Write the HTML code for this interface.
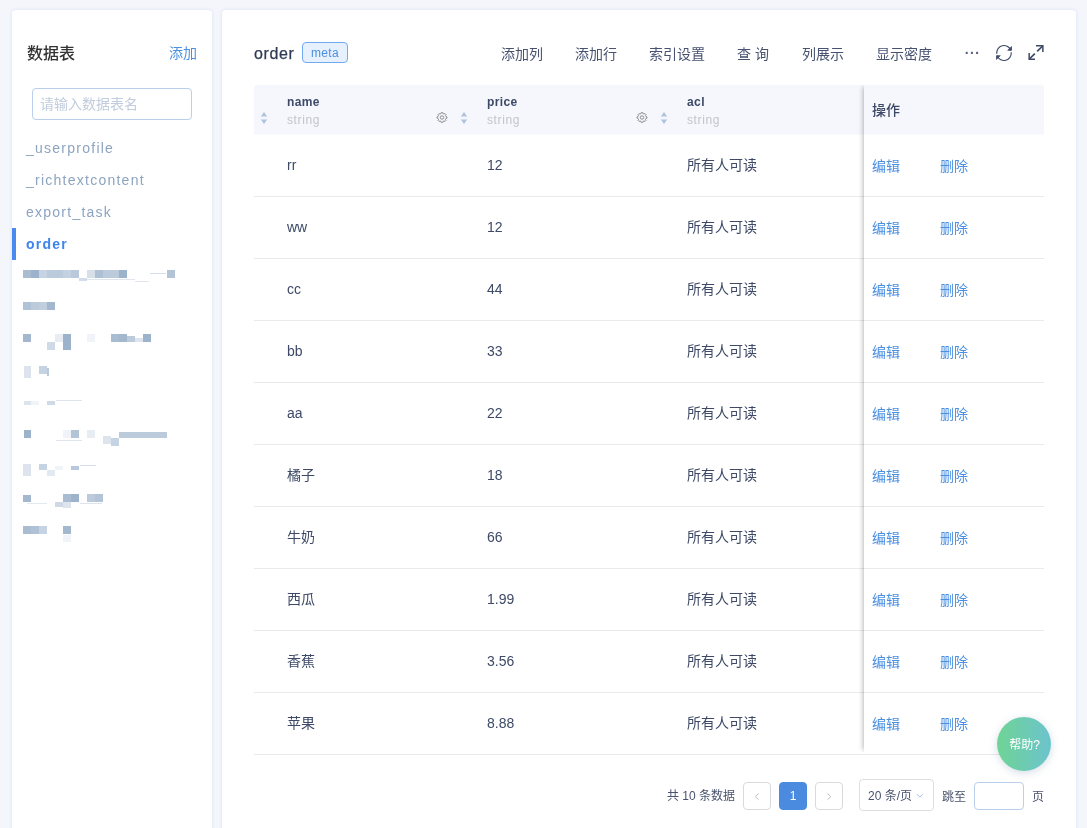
<!DOCTYPE html>
<html lang="zh-CN">
<head>
<meta charset="utf-8">
<title>order</title>
<style>
*{box-sizing:border-box;margin:0;padding:0}
html,body{width:1087px;height:828px;overflow:hidden}
body{background:#f4f6fb;font-family:"Liberation Sans","Noto Sans CJK SC",sans-serif;font-size:14px;color:#3d4966;position:relative}
.card{position:absolute;background:#fff;border-radius:4px;box-shadow:0 0 3px 1px #e1e8f5;will-change:transform}
#left{left:12px;top:10px;width:200px;height:830px}
#right{left:222px;top:10px;width:854px;height:830px}
.abs{position:absolute;white-space:nowrap}
a{color:#4a8fe2;text-decoration:none}
#left h3{left:15px;top:33px;font-size:16px;line-height:22px;font-weight:500;color:#333}
#left .add{left:157px;top:33px;font-size:14px;line-height:20px}
#left .search{left:20px;top:78px;width:160px;height:32px;border:1px solid #b9cfec;border-radius:4px;padding:0 7px;line-height:30px;color:#c1ccdd;font-size:14px}
#left ul{position:absolute;left:0;top:122px;width:200px;list-style:none}
#left li{height:32px;line-height:32px;padding-left:14px;font-size:14px;letter-spacing:1.25px;color:#8da4c0;position:relative}
#left li.sel{color:#3d84ee;font-weight:bold}
#left li.sel:before{content:"";position:absolute;left:0;top:0;width:4px;height:32px;background:#4a8af0}
#left i{position:absolute;display:block}
#right h2{left:32px;top:33px;font-size:16px;line-height:22px;font-weight:normal;letter-spacing:0.6px;color:#2f3b55;-webkit-text-stroke:0.25px #2f3b55}
.tag{left:80px;top:32px;width:46px;height:21px;border:1px solid #72aaf2;border-radius:4px;background:#e7f1fe;color:#4a8fe2;font-size:12px;line-height:20px;letter-spacing:0.3px;text-align:center}
.tb{top:34px;font-size:14px;line-height:20px;color:#465270}
.hd{position:absolute;left:32px;top:75px;width:790px;height:50px;background:linear-gradient(#f5f7fc 49px,#fafbfe 49px);border-radius:3px 3px 0 0}
table{border-collapse:separate;border-spacing:0;table-layout:fixed}
#main{position:absolute;left:32px;top:75px;width:610px}
#main th{height:50px;text-align:left;vertical-align:top;font-size:12px;position:relative}
#main th b{display:block;margin-top:9px;line-height:16px;color:#3d4966;font-weight:bold;letter-spacing:0.4px}
#main th span{display:block;line-height:18px;margin-top:1px;color:#c0c4cc;font-weight:normal;letter-spacing:0.6px}
#main td{height:62px;border-bottom:1px solid #e8eaec;font-size:14px;color:#3d4966;vertical-align:middle;padding-bottom:2px}
.sort{position:absolute;left:6px;top:27px}
.gear{position:absolute;left:-18px;top:26px}
#fixed{position:absolute;left:642px;top:75px;width:180px;height:670px}
#fshadow{position:absolute;left:642px;top:75px;width:20px;height:667px;box-shadow:-3px 0 5px -2px rgba(0,0,0,.28);clip-path:inset(0 20px 0 -12px)}
#fixed table{width:180px}
#fixed th{height:50px;text-align:left;padding-left:8px;font-size:14px;font-weight:500;color:#3d4966;padding-bottom:2px}
#fixed td{height:62px;border-bottom:1px solid #e8eaec;padding-left:8px;padding-bottom:1px}
#fixed a.del{margin-left:40px}
.cj{position:relative;top:-1px}
.pg{font-size:12px;color:#4a536e}
.pbtn{width:28px;height:28px;top:772px;border:1px solid #d9dadd;border-radius:4px;text-align:center;line-height:26px;font-size:12px;color:#c5c8ce;background:#fff}
.pbtn.on{background:#4a8be0;border-color:#4a8be0;color:#fff;font-size:12px}
.pbtn svg{position:absolute;left:10px;top:9px}
.help{left:775px;top:707px;width:54px;height:54px;border-radius:50%;background:linear-gradient(90deg,#6fd495,#6cc3cd);color:#fff;font-size:12px;line-height:57px;text-align:center;padding-left:1px;box-shadow:0 2px 8px rgba(90,120,160,.25)}
</style>
</head>
<body>
<div class="card" id="left">
  <h3 class="abs">数据表</h3>
  <a class="abs add">添加</a>
  <div class="abs search">请输入数据表名</div>
  <ul>
    <li>_userprofile</li>
    <li>_richtextcontent</li>
    <li>export_task</li>
    <li class="sel">order</li>
  </ul>
  <i style="left:11px;top:260px;width:8px;height:8px;background:#a9bcd2"></i><i style="left:19px;top:260px;width:8px;height:8px;background:#9db3cc"></i><i style="left:27px;top:260px;width:8px;height:8px;background:#c5d3e2"></i><i style="left:35px;top:260px;width:8px;height:8px;background:#bccbdc"></i><i style="left:43px;top:260px;width:8px;height:8px;background:#bccbdc"></i><i style="left:51px;top:260px;width:8px;height:8px;background:#c3d1e0"></i><i style="left:59px;top:260px;width:8px;height:8px;background:#b9c9db"></i><i style="left:67px;top:268px;width:8px;height:3px;background:#d3dde9"></i><i style="left:75px;top:260px;width:8px;height:8px;background:#d7e0ea"></i><i style="left:83px;top:260px;width:8px;height:8px;background:#aec0d4"></i><i style="left:91px;top:260px;width:8px;height:8px;background:#bccbdc"></i><i style="left:99px;top:260px;width:8px;height:8px;background:#bccbdc"></i><i style="left:107px;top:260px;width:8px;height:8px;background:#9db3cc"></i><i style="left:155px;top:260px;width:8px;height:8px;background:#b3c4d7"></i><i style="left:75px;top:269px;width:48px;height:1px;background:#dfe6ef"></i><i style="left:123px;top:271px;width:14px;height:1px;background:#dfe6ef"></i><i style="left:138px;top:263px;width:16px;height:1px;background:#d5deea"></i><i style="left:11px;top:292px;width:8px;height:8px;background:#b0c2d6"></i><i style="left:19px;top:292px;width:8px;height:8px;background:#bccbdc"></i><i style="left:27px;top:292px;width:8px;height:8px;background:#c0cede"></i><i style="left:35px;top:292px;width:8px;height:8px;background:#a3b8cf"></i><i style="left:11px;top:324px;width:8px;height:8px;background:#a3b8cf"></i><i style="left:43px;top:324px;width:8px;height:8px;background:#e8edf4"></i><i style="left:51px;top:324px;width:8px;height:16px;background:#9db3cc"></i><i style="left:35px;top:332px;width:8px;height:8px;background:#d0dae7"></i><i style="left:75px;top:324px;width:8px;height:8px;background:#f0f3f8"></i><i style="left:99px;top:324px;width:8px;height:8px;background:#a9bcd2"></i><i style="left:107px;top:324px;width:8px;height:8px;background:#a3b8cf"></i><i style="left:115px;top:326px;width:8px;height:6px;background:#bccbdc"></i><i style="left:123px;top:328px;width:8px;height:4px;background:#dde4ed"></i><i style="left:131px;top:324px;width:8px;height:8px;background:#9db3cc"></i><i style="left:12px;top:356px;width:7px;height:12px;background:#dde4ed"></i><i style="left:27px;top:356px;width:8px;height:8px;background:#c5d3e2"></i><i style="left:35px;top:358px;width:2px;height:8px;background:#b9c9db"></i><i style="left:12px;top:391px;width:7px;height:4px;background:#dde4ed"></i><i style="left:19px;top:391px;width:8px;height:4px;background:#f0f3f8"></i><i style="left:35px;top:391px;width:8px;height:4px;background:#d0dae7"></i><i style="left:44px;top:390px;width:26px;height:1px;background:#dde4ed"></i><i style="left:12px;top:420px;width:7px;height:8px;background:#9db3cc"></i><i style="left:51px;top:420px;width:8px;height:8px;background:#f0f3f8"></i><i style="left:59px;top:420px;width:8px;height:8px;background:#b3c4d7"></i><i style="left:75px;top:420px;width:8px;height:8px;background:#e8edf4"></i><i style="left:91px;top:426px;width:8px;height:8px;background:#dde4ed"></i><i style="left:99px;top:428px;width:8px;height:8px;background:#c5d3e2"></i><i style="left:107px;top:422px;width:48px;height:6px;background:#bccbdc"></i><i style="left:44px;top:430px;width:26px;height:1px;background:#dfe6ef"></i><i style="left:11px;top:454px;width:8px;height:12px;background:#dde4ed"></i><i style="left:27px;top:454px;width:8px;height:6px;background:#c5d3e2"></i><i style="left:35px;top:460px;width:8px;height:6px;background:#e3e9f1"></i><i style="left:43px;top:456px;width:8px;height:4px;background:#f0f3f8"></i><i style="left:59px;top:456px;width:8px;height:4px;background:#b9c9db"></i><i style="left:68px;top:455px;width:16px;height:1px;background:#d5deea"></i><i style="left:11px;top:485px;width:8px;height:7px;background:#a3b8cf"></i><i style="left:51px;top:484px;width:8px;height:8px;background:#a9bcd2"></i><i style="left:59px;top:484px;width:8px;height:8px;background:#9db3cc"></i><i style="left:75px;top:484px;width:8px;height:8px;background:#bccbdc"></i><i style="left:83px;top:484px;width:8px;height:8px;background:#b3c4d7"></i><i style="left:43px;top:492px;width:8px;height:5px;background:#cfd9e6"></i><i style="left:51px;top:492px;width:8px;height:6px;background:#dde4ed"></i><i style="left:15px;top:493px;width:20px;height:1px;background:#e3e9f1"></i><i style="left:68px;top:493px;width:22px;height:1px;background:#dde4ed"></i><i style="left:11px;top:516px;width:8px;height:8px;background:#a9bcd2"></i><i style="left:19px;top:516px;width:8px;height:8px;background:#b0c2d6"></i><i style="left:27px;top:516px;width:8px;height:8px;background:#c5d3e2"></i><i style="left:51px;top:516px;width:8px;height:8px;background:#a3b8cf"></i><i style="left:51px;top:525px;width:8px;height:7px;background:#f0f3f8"></i>
</div>
<div class="card" id="right">
  <h2 class="abs">order</h2>
  <div class="abs tag">meta</div>
  <div class="abs tb" style="left:279px">添加列</div>
  <div class="abs tb" style="left:353px">添加行</div>
  <div class="abs tb" style="left:427px">索引设置</div>
  <div class="abs tb" style="left:515px">查 询</div>
  <div class="abs tb" style="left:580px">列展示</div>
  <div class="abs tb" style="left:654px">显示密度</div>
  <svg class="abs" style="left:743px;top:41px" width="14" height="4" viewBox="0 0 14 4"><rect x="0.7" y="0.8" width="2" height="2.2" fill="#566180"/><rect x="5.9" y="0.8" width="2" height="2.2" fill="#566180"/><rect x="11.1" y="0.8" width="2" height="2.2" fill="#566180"/></svg>
  <svg class="abs" style="left:773px;top:34px" width="18" height="18" viewBox="0 0 18 18" fill="none" stroke="#3d4966" stroke-width="1.1" stroke-linecap="round" stroke-linejoin="round"><path d="M1.8 9.4 A7.2 7.2 0 0 1 15.6 5.9"/><path d="M16.5 2.9 V6.3 H13.1 Z" fill="#3d4966" stroke-width="0.8"/><path d="M16.2 8.6 A7.2 7.2 0 0 1 2.4 12.1"/><path d="M1.5 15.1 V11.7 H4.9 Z" fill="#3d4966" stroke-width="0.8"/></svg>
  <svg class="abs" style="left:806px;top:35px" width="16" height="16" viewBox="0 0 16 16" fill="none" stroke="#3d4966" stroke-width="1.5" stroke-linecap="butt" stroke-linejoin="miter"><path d="M9.2 6.4 L14.6 1" stroke-width="1.7"/><path d="M8 0.8 H14.85 V7"/><path d="M6.8 8.6 L1.4 14" stroke-width="1.7"/><path d="M1.15 8 V14.15 H7"/></svg>

  <div class="hd"></div>
  <table id="main">
    <colgroup><col style="width:33px"><col style="width:167px"><col style="width:33px"><col style="width:167px"><col style="width:33px"><col style="width:177px"></colgroup>
    <thead><tr>
      <th><svg class="sort" viewBox="0 0 8 13" width="8" height="13"><path d="M4 0 L7.25 4.4 H0.75 Z M4 12.1 L7.25 7.6 H0.75 Z" fill="#afc4df"/></svg></th><th><b>name</b><span>string</span></th>
      <th><svg class="gear" viewBox="0 -0.5 12 12" width="12" height="12" fill="none" stroke="#7d7d80" stroke-width="0.85" stroke-linejoin="round"><path d="M5.09 2.05 L5.30 1.05 L6.70 1.05 L6.91 2.05 L8.15 2.57 L9.01 2.01 L9.99 2.99 L9.43 3.85 L9.95 5.09 L10.95 5.30 L10.95 6.70 L9.95 6.91 L9.43 8.15 L9.99 9.01 L9.01 9.99 L8.15 9.43 L6.91 9.95 L6.70 10.95 L5.30 10.95 L5.09 9.95 L3.85 9.43 L2.99 9.99 L2.01 9.01 L2.57 8.15 L2.05 6.91 L1.05 6.70 L1.05 5.30 L2.05 5.09 L2.57 3.85 L2.01 2.99 L2.99 2.01 L3.85 2.57 Z"/><circle cx="6" cy="6" r="1.7"/></svg><svg class="sort" viewBox="0 0 8 13" width="8" height="13"><path d="M4 0 L7.25 4.4 H0.75 Z M4 12.1 L7.25 7.6 H0.75 Z" fill="#afc4df"/></svg></th><th><b>price</b><span>string</span></th>
      <th><svg class="gear" viewBox="0 -0.5 12 12" width="12" height="12" fill="none" stroke="#7d7d80" stroke-width="0.85" stroke-linejoin="round"><path d="M5.09 2.05 L5.30 1.05 L6.70 1.05 L6.91 2.05 L8.15 2.57 L9.01 2.01 L9.99 2.99 L9.43 3.85 L9.95 5.09 L10.95 5.30 L10.95 6.70 L9.95 6.91 L9.43 8.15 L9.99 9.01 L9.01 9.99 L8.15 9.43 L6.91 9.95 L6.70 10.95 L5.30 10.95 L5.09 9.95 L3.85 9.43 L2.99 9.99 L2.01 9.01 L2.57 8.15 L2.05 6.91 L1.05 6.70 L1.05 5.30 L2.05 5.09 L2.57 3.85 L2.01 2.99 L2.99 2.01 L3.85 2.57 Z"/><circle cx="6" cy="6" r="1.7"/></svg><svg class="sort" viewBox="0 0 8 13" width="8" height="13"><path d="M4 0 L7.25 4.4 H0.75 Z M4 12.1 L7.25 7.6 H0.75 Z" fill="#afc4df"/></svg></th><th><b>acl</b><span>string</span></th>
    </tr></thead>
    <tbody>
<tr><td class="c0"></td><td>rr</td><td></td><td>12</td><td></td><td><span class="cj">所有人可读</span></td></tr>
<tr><td class="c0"></td><td>ww</td><td></td><td>12</td><td></td><td><span class="cj">所有人可读</span></td></tr>
<tr><td class="c0"></td><td>cc</td><td></td><td>44</td><td></td><td><span class="cj">所有人可读</span></td></tr>
<tr><td class="c0"></td><td>bb</td><td></td><td>33</td><td></td><td><span class="cj">所有人可读</span></td></tr>
<tr><td class="c0"></td><td>aa</td><td></td><td>22</td><td></td><td><span class="cj">所有人可读</span></td></tr>
<tr><td class="c0"></td><td><span class="cj">橘子</span></td><td></td><td>18</td><td></td><td><span class="cj">所有人可读</span></td></tr>
<tr><td class="c0"></td><td><span class="cj">牛奶</span></td><td></td><td>66</td><td></td><td><span class="cj">所有人可读</span></td></tr>
<tr><td class="c0"></td><td><span class="cj">西瓜</span></td><td></td><td>1.99</td><td></td><td><span class="cj">所有人可读</span></td></tr>
<tr><td class="c0"></td><td><span class="cj">香蕉</span></td><td></td><td>3.56</td><td></td><td><span class="cj">所有人可读</span></td></tr>
<tr><td class="c0"></td><td><span class="cj">苹果</span></td><td></td><td>8.88</td><td></td><td><span class="cj">所有人可读</span></td></tr>
    </tbody>
  </table>
  <div id="fshadow"></div>
  <div id="fixed">
    <table>
      <thead><tr><th>操作</th></tr></thead>
      <tbody>
<tr><td><a>编辑</a><a class="del">删除</a></td></tr>
<tr><td><a>编辑</a><a class="del">删除</a></td></tr>
<tr><td><a>编辑</a><a class="del">删除</a></td></tr>
<tr><td><a>编辑</a><a class="del">删除</a></td></tr>
<tr><td><a>编辑</a><a class="del">删除</a></td></tr>
<tr><td><a>编辑</a><a class="del">删除</a></td></tr>
<tr><td><a>编辑</a><a class="del">删除</a></td></tr>
<tr><td><a>编辑</a><a class="del">删除</a></td></tr>
<tr><td><a>编辑</a><a class="del">删除</a></td></tr>
<tr><td><a>编辑</a><a class="del">删除</a></td></tr>
      </tbody>
    </table>
  </div>

  <div class="abs pg" style="left:445px;top:777px;line-height:18px">共 10 条数据</div>
  <div class="abs pbtn" style="left:521px"><svg width="6" height="9" viewBox="0 0 6 9" fill="none" stroke="#bfc2c8" stroke-width="1"><path d="M4.6 1.5 L1.2 4.6 L4.6 7.7"/></svg></div>
  <div class="abs pbtn on" style="left:557px">1</div>
  <div class="abs pbtn" style="left:593px"><svg width="6" height="9" viewBox="0 0 6 9" fill="none" stroke="#bfc2c8" stroke-width="1"><path d="M1.4 1.5 L4.8 4.6 L1.4 7.7"/></svg></div>
  <div class="abs pg" style="left:637px;top:769px;width:75px;height:32px;border:1px solid #dcdee2;border-radius:4px;line-height:32px;padding-left:8px">20 条/页<svg style="position:absolute;left:56px;top:13px" width="8" height="6" viewBox="0 0 8 6" fill="none" stroke="#a3bde0" stroke-width="1"><path d="M1 1.2 L3.8 4.1 L6.6 1.2"/></svg></div>
  <div class="abs pg" style="left:720px;top:778px;line-height:18px">跳至</div>
  <div class="abs" style="left:752px;top:772px;width:50px;height:28px;border:1px solid #b9cfec;border-radius:4px"></div>
  <div class="abs pg" style="left:810px;top:778px;line-height:18px">页</div>
  <div class="abs help">帮助?</div>
</div>
</body>
</html>
